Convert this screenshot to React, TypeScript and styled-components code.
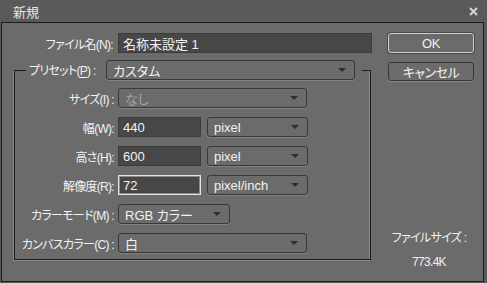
import React from 'react'
import styled, { createGlobalStyle } from 'styled-components'

const COLOR = {
    frame: '#5a5a5a',
    body: '#6b6b6b',
    line: '#1d1d1d',
    etch: '#8a8a8a',
    field: '#474747',
    fieldBorder: '#3c3c3c',
    text: '#f2f2f2',
    disabled: '#a4a4a4',
    arrow: '#2e2e2e',
}

const GlobalStyle = createGlobalStyle`
    html, body {
        margin: 0;
        padding: 0;
        background: ${COLOR.frame};
    }
    * {
        box-sizing: border-box;
    }
`

const LABEL_FONT = `"Liberation Sans", "Noto Sans CJK JP", sans-serif`

interface ISelectProps {
    value: string
    width: number
    disabled?: boolean
}

function Select({ value, width, disabled }: ISelectProps) {
    return <SelectBox style={{ width }}>
        <SelectValue disabled={disabled}>{value}</SelectValue>
        <Arrow />
    </SelectBox>
}

interface IRowProps {
    label: React.ReactNode
    children: React.ReactNode
}

function FormRow({ label, children }: IRowProps) {
    return <Row>
        <Label>{label}</Label>
        <Controls>{children}</Controls>
    </Row>
}

export default function App() {
    return <Window>
        <GlobalStyle />
        <TitleBar>
            <Title>新規</Title>
            <CloseIcon width="9" height="9" viewBox="0 0 9 9">
                <path d="M1 1 L8 8 M8 1 L1 8" stroke="#d4d4d4" strokeWidth="2" />
            </CloseIcon>
        </TitleBar>
        <Body>
            <FormColumn>
                <FileRow>
                    <Label>ファイル名(N):</Label>
                    <TextField style={{ width: 254 }}>名称未設定 1</TextField>
                </FileRow>
                <Group>
                    <Legend>
                        <LegendLabel>プリセット(<u>P</u>) :</LegendLabel>
                        <Select value="カスタム" width={249} />
                    </Legend>
                    <Rows>
                        <FormRow label="サイズ(I) :">
                            <Select value="なし" width={189} disabled />
                        </FormRow>
                        <FormRow label="幅(W):">
                            <TextField style={{ width: 83 }}>440</TextField>
                            <Select value="pixel" width={101} />
                        </FormRow>
                        <FormRow label="高さ(H):">
                            <TextField style={{ width: 83 }}>600</TextField>
                            <Select value="pixel" width={101} />
                        </FormRow>
                        <FormRow label="解像度(R):">
                            <TextField focused style={{ width: 83 }}>72</TextField>
                            <Select value="pixel/inch" width={101} />
                        </FormRow>
                        <FormRow label="カラーモード(M) :">
                            <Select value="RGB カラー" width={112} />
                        </FormRow>
                        <FormRow label="カンバスカラー(C) :">
                            <Select value="白" width={189} />
                        </FormRow>
                    </Rows>
                </Group>
            </FormColumn>
            <SideColumn>
                <Button primary>OK</Button>
                <Button>キャンセル</Button>
                <FileSize>
                    <span>ファイルサイズ :</span>
                    <span>773.4K</span>
                </FileSize>
            </SideColumn>
        </Body>
    </Window>
}

const Window = styled.div`
    width: 487px;
    height: 283px;
    display: flex;
    flex-direction: column;
    background: ${COLOR.frame};
    font-family: ${LABEL_FONT};
    font-feature-settings: "palt";
    color: ${COLOR.text};
`

const TitleBar = styled.div`
    height: 22px;
    display: flex;
    align-items: center;
    justify-content: space-between;
    padding: 1px 9px 0 13px;
`

const Title = styled.span`
    font-size: 13px;
    color: #e6e6e6;
`

const CloseIcon = styled.svg`
    display: block;
`

const Body = styled.div`
    flex: 1;
    margin: 0 3px 1px 1px;
    border: 1px solid ${COLOR.line};
    background: ${COLOR.body};
    display: flex;
    gap: 16px;
    padding: 10px 9px 12px 12px;
`

const FormColumn = styled.div`
    display: flex;
    flex-direction: column;
    gap: 7px;
    width: 358px;
`

const FileRow = styled.div`
    display: flex;
    align-items: center;
    gap: 5px;
`

const Label = styled.span`
    width: 99px;
    flex: none;
    text-align: right;
    font-size: 12px;
    letter-spacing: -0.7px;
    white-space: nowrap;
    color: ${COLOR.text};
`

const TextField = styled.div<{ focused?: boolean }>`
    height: 20px;
    flex: none;
    display: flex;
    align-items: center;
    padding: 0 4px;
    font-size: 13px;
    background: ${COLOR.field};
    border: 1px solid ${p => p.focused ? '#e4e4e4' : COLOR.fieldBorder};
    box-shadow: ${p => p.focused ? 'inset 0 0 0 1px #8c8c8c' : 'none'};
    color: ${COLOR.text};
    white-space: nowrap;
`

const Group = styled.fieldset`
    margin: 0 1px 6px 0;
    padding: 8px 0 6px 0;
    min-width: 0;
    border: 1px solid ${COLOR.line};
    box-shadow: -1px 1px 0 ${COLOR.etch}, inset -1px 0 0 ${COLOR.etch};
`

const Legend = styled.legend`
    display: flex;
    align-items: center;
    margin-left: 11px;
    padding: 0 7px 0 3px;
`

const LegendLabel = styled.span`
    width: 77px;
    font-size: 12px;
    letter-spacing: -0.7px;
    white-space: nowrap;
    padding-bottom: 1px;

    u {
        text-underline-offset: 2px;
    }
`

const Rows = styled.div`
    display: flex;
    flex-direction: column;
    gap: 9px;
`

const Row = styled.div`
    display: flex;
    align-items: center;
    gap: 4px;
    height: 20px;
`

const Controls = styled.div`
    display: flex;
    gap: 6px;
`

const SelectBox = styled.div`
    height: 20px;
    flex: none;
    display: flex;
    align-items: center;
    justify-content: space-between;
    padding: 0 8px 0 6px;
    background: ${COLOR.body};
    border: 1px solid #383838;
    border-radius: 3px;
    box-shadow: 0 1px 0 #818181;
`

const SelectValue = styled.span<{ disabled?: boolean }>`
    font-size: 13px;
    color: ${p => p.disabled ? COLOR.disabled : COLOR.text};
    white-space: nowrap;
`

const Arrow = styled.span`
    width: 0;
    height: 0;
    border-left: 4px solid transparent;
    border-right: 4px solid transparent;
    border-top: 4px solid ${COLOR.arrow};
`

const SideColumn = styled.div`
    width: 87px;
    display: flex;
    flex-direction: column;
    gap: 9px;
`

const Button = styled.div<{ primary?: boolean }>`
    height: ${p => p.primary ? 20 : 19}px;
    display: flex;
    align-items: center;
    justify-content: center;
    font-size: 13px;
    letter-spacing: -0.5px;
    border-radius: 3px;
    background: ${COLOR.body};
    border: 1px solid ${p => p.primary ? '#cfcfcf' : '#353535'};
    box-shadow: ${p => p.primary ? '0 0 0 1px #4a4a4a' : '0 1px 0 #8a8a8a'};
    color: ${COLOR.text};
`

const FileSize = styled.div`
    margin-top: auto;
    display: flex;
    flex-direction: column;
    align-items: center;
    gap: 10px;
    font-size: 12px;
    letter-spacing: -0.7px;
    line-height: 14px;
    padding-right: 4px;
`
